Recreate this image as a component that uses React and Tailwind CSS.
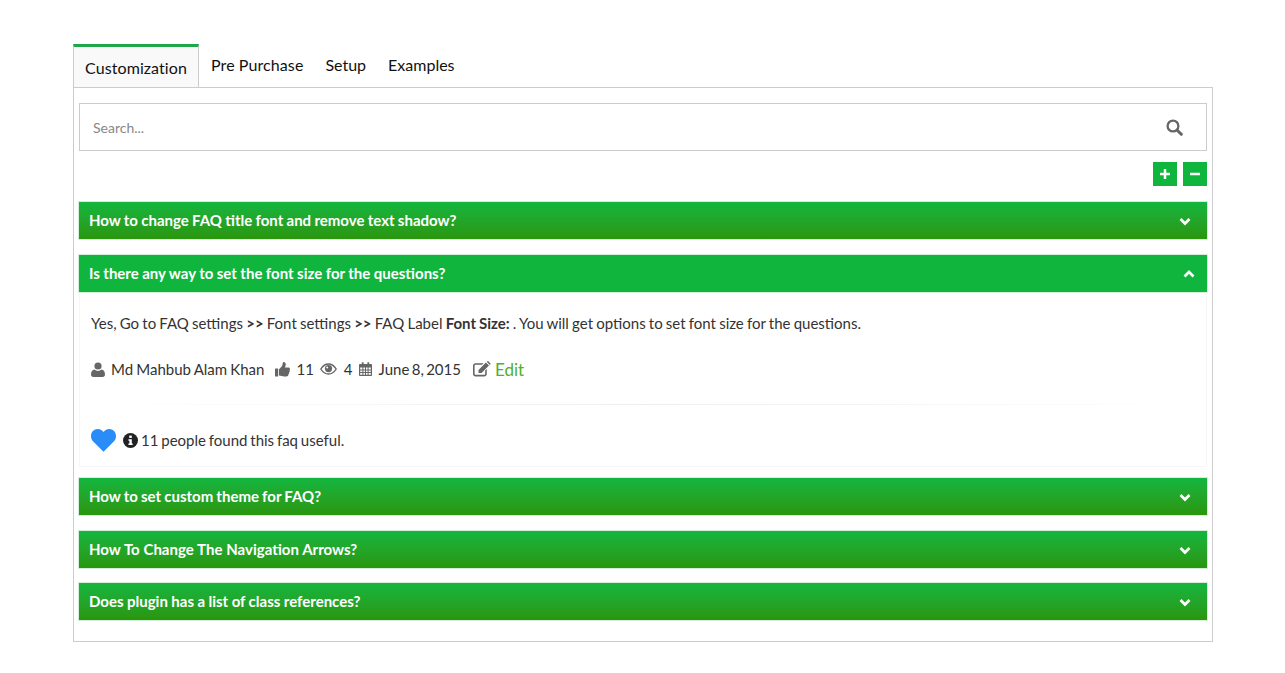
import React from "react";

function Chevron({ up }) {
  return (
    <svg width="12" height="12" viewBox="0 0 12 12" fill="none" stroke="#fff" strokeWidth="2.7">
      <polyline points={up ? "1.5,8.5 6,4 10.5,8.5" : "1.5,4 6,8.5 10.5,4"} />
    </svg>
  );
}

function Head({ title, open, className, ws }) {
  return (
    <div className={`flex items-center justify-between h-[37px] shadow-[0_0_0_1px_#d3efd8] pl-[10px] text-white font-bold text-[15px] ${open ? "bg-[#10b53e] pr-[12px]" : "bg-gradient-to-b from-[#12b63e] to-[#2a960b] pr-[16px]"} ${className}`}>
      <span className={ws}>{title}</span>
      <Chevron up={open} />
    </div>
  );
}

const User = () => (
  <svg width="14" height="15" viewBox="0 0 14 15" fill="#666">
    <circle cx="7" cy="4" r="3.6" />
    <path d="M0 12.6C0 9.5 1.4 7.8 3.4 7.6 4.4 8.4 5.6 8.9 7 8.9s2.6-.5 3.6-1.3c2 .2 3.4 1.9 3.4 5 0 1.4-1 2.4-2.4 2.4H2.4C1 15 0 14 0 12.6z" />
  </svg>
);

const Thumb = () => (
  <svg width="15" height="15" viewBox="0 0 15 15" fill="#666">
    <rect x="0" y="6.5" width="3.2" height="8" rx="0.4" />
    <path d="M4 7.2c1.3-1 2.8-2.6 3.4-4.2.3-.9.2-3 1.2-3 1.4 0 2.2 1.2 2.2 2.6 0 1.1-.5 2-.9 2.9h3.5c.9 0 1.6.7 1.6 1.5 0 .5-.2.9-.5 1.2.2.3.3.7.3 1 0 .6-.3 1.1-.8 1.4.1.2.1.4.1.7 0 .6-.4 1.1-.9 1.3.1.2.1.4.1.5 0 1-.8 1.4-1.9 1.4H9.3c-2 0-3.3-.8-5.3-1V7.2z" />
  </svg>
);

const Eye = () => (
  <svg width="17" height="12" viewBox="0 0 17 12">
    <path d="M0.8 6C2.7 3 5.4 1 8.500 1s5.800 2 7.700 5c-1.900 3-4.600 5-7.700 5S2.700 9 .8 6z" fill="none" stroke="#666" strokeWidth="1.4" />
    <circle cx="8.500" cy="5.600" r="3.600" fill="#666" />
    <circle cx="7.200" cy="4.400" r="1" fill="#fff" />
  </svg>
);

const Calendar = () => (
  <svg width="13" height="14" viewBox="0 0 13 14">
    <path fillRule="evenodd" fill="#666" d="M1 2h1.800V.3h1.800V2h3.800V.3h1.800V2H12c.6 0 1 .4 1 1v10c0 .6-.4 1-1 1H1c-.6 0-1-.4-1-1V3c0-.6.4-1 1-1zM1.200 5.600v1.800h2.200V5.600zm3.200 0v1.800h1.600V5.600zm2.600 0v1.800h1.600V5.600zm2.600 0v1.800h2.200V5.600zM1.200 8.400v1.700h2.200V8.400zm3.200 0v1.700h1.600V8.400zm2.600 0v1.700h1.600V8.400zm2.600 0v1.700h2.200V8.400zM1.200 11v1.700h2.200V11zm3.200 0v1.700h1.600V11zm2.600 0v1.700h1.600V11zm2.600 0v1.700h2.200V11z" />
  </svg>
);

const Edit = () => (
  <svg width="18" height="16" viewBox="0 0 17 15" fill="#666">
    <path d="M2.400 2H10L8.500 3.500H2.400a.9.9 0 0 0-.9.9v7.700c0 .5.4.9.9.9h8.200c.5 0 .9-.4.9-.9V9l1.500-1.500v4.700c0 1.300-1.100 2.400-2.400 2.400H2.400C1.100 14.600 0 13.500 0 12.200V4.400C0 3.100 1.100 2 2.400 2z" />
    <path d="M5.200 8.400 12.200 1.400l2.900 2.900-7 7H5.200zM13 .6l.7-.5c.3-.2.6-.1.8.1l2 2c.2.2.2.5 0 .8l-.6.7z" />
  </svg>
);

const Heart = () => (
  <svg width="25" height="23" viewBox="0 0 25 23" fill="#2a8cf7">
    <path d="M12.500 22.800 2 12.300C.7 11 0 9.300 0 7.200 0 3.100 2.900 0 6.800 0c2.200 0 4.200 1 5.700 3 1.500-2 3.500-3 5.700-3C22.100 0 25 3.100 25 7.200c0 2.100-.7 3.800-2 5.100z" />
  </svg>
);

const Info = () => (
  <svg width="15" height="15" viewBox="0 0 15 15">
    <circle cx="7.500" cy="7.500" r="7.500" fill="#222" />
    <rect x="6.200" y="2.600" width="2.600" height="2.300" fill="#fff" />
    <path d="M5.400 6.200h3.400v4.300h.9v1.600H5.400v-1.600h1V7.800h-1z" fill="#fff" />
  </svg>
);

const Search = () => (
  <svg width="17" height="17" viewBox="0 0 17 17" fill="none" stroke="#666">
    <circle cx="7" cy="7" r="5.400" strokeWidth="2.300" />
    <line x1="11.200" y1="11.200" x2="15.300" y2="15.300" strokeWidth="3" strokeLinecap="round" />
  </svg>
);

export default function App() {
  return (
    <div className="bg-white h-[673px] pt-[44px] px-[73px] font-['Lato','Noto_Sans',sans-serif] text-[#222]">
      <div className="w-[1140px]">
        <div className="flex items-start h-[43px] text-[#111] text-[16px]">
          <div className="w-[126px] h-[43px] border-t-[3px] border-t-[#1fa84a] border-x border-x-[#ccc] bg-[#f9f9f9] flex items-center justify-center pt-[2px] tracking-[0.08px]">Customization</div>
          <div className="ml-[12px] mt-[10px] leading-[22px] tracking-[0.09px]">Pre Purchase</div>
          <div className="ml-[22px] mt-[10px] leading-[22px]">Setup</div>
          <div className="ml-[22px] mt-[10px] leading-[22px]">Examples</div>
        </div>
        <div className="border border-[#ccc] h-[555px] px-[5px] pt-[15px]">
          <div className="h-[48px] border border-[#ccc] flex items-center justify-between pl-[13px] pr-[23px]">
            <span className="text-[14px] text-[#888] pt-[1px]">Search...</span>
            <Search />
          </div>
          <div className="flex justify-end gap-[6px] mt-[11px]">
            <div className="w-[24px] h-[24px] bg-[#10b53e] flex items-center justify-center">
              <svg width="10" height="10" viewBox="0 0 10 10" stroke="#fff" strokeWidth="2.500"><line x1="5" y1="0" x2="5" y2="10" /><line x1="0" y1="5" x2="10" y2="5" /></svg>
            </div>
            <div className="w-[24px] h-[24px] bg-[#10b53e] flex items-center justify-center">
              <svg width="10" height="10" viewBox="0 0 10 10" stroke="#fff" strokeWidth="2.500"><line x1="0" y1="5" x2="10" y2="5" /></svg>
            </div>
          </div>
          <Head className="mt-[16px]" ws="[word-spacing:-0.35px]" title="How to change FAQ title font and remove text shadow?" />
          <Head className="mt-[16px]" ws="[word-spacing:-0.17px]" open title="Is there any way to set the font size for the questions?" />
          <div className="h-[175px] border-x border-b border-[#f6f6f6] pl-[11px] pt-[22px] text-[15px] text-[#333] [word-spacing:-0.65px]">
            <div className="leading-[18px]">Yes, Go to FAQ settings <b>&gt;&gt;</b> Font settings <b>&gt;&gt;</b> FAQ Label <b>Font Size:</b> . You will get options to set font size for the questions.</div>
            <div className="flex items-center h-[18px] mt-[28px] leading-[18px]">
              <User />
              <span className="ml-[6px]">Md Mahbub Alam Khan</span>
              <span className="ml-[11px]"><Thumb /></span>
              <span className="ml-[6px]">11</span>
              <span className="ml-[6px]"><Eye /></span>
              <span className="ml-[7px]">4</span>
              <span className="ml-[6px]"><Calendar /></span>
              <span className="ml-[7px] [word-spacing:-1.5px]">June 8, 2015</span>
              <span className="ml-[12px]"><Edit /></span>
              <span className="ml-[4px] translate-y-[1px] text-[#4fb02a] text-[17px]">Edit</span>
            </div>
            <div className="mt-[26px] mr-[8px] h-px bg-gradient-to-r from-white via-[#eee] to-white" />
            <div className="flex items-center mt-[24px]">
              <Heart />
              <span className="ml-[7px]"><Info /></span>
              <span className="ml-[3px] [word-spacing:-1px]">11 people found this faq useful.</span>
            </div>
          </div>
          <Head className="mt-[11px]" ws="[word-spacing:-0.5px]" title="How to set custom theme for FAQ?" />
          <Head className="mt-[16px]" ws="[word-spacing:0.15px]" title="How To Change The Navigation Arrows?" />
          <Head className="mt-[15px]" ws="[word-spacing:-0.2px]" title="Does plugin has a list of class references?" />
        </div>
      </div>
    </div>
  );
}
